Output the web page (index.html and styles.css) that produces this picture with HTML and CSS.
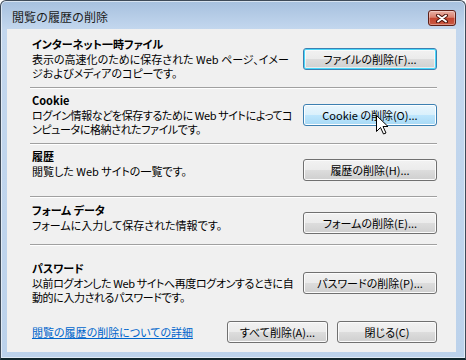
FILE: index.html
```html
<!DOCTYPE html>
<html lang="ja">
<head>
<meta charset="utf-8">
<title>閲覧の履歴の削除</title>
<link rel="stylesheet" href="styles.css">
</head>
<body>
<div class="window">
  <div class="titlebar">
    <span class="title">閲覧の履歴の削除</span>
    <span class="close-btn">
      <svg width="14" height="9" viewBox="0 0 14 9"><path d="M3 1.5 L11 7.5 M11 1.5 L3 7.5" stroke="#4a120b" stroke-width="4" stroke-linecap="round" fill="none"/><path d="M3 1.5 L11 7.5 M11 1.5 L3 7.5" stroke="#ffffff" stroke-width="2" stroke-linecap="round" fill="none"/></svg>
    </span>
  </div>
  <div class="client">
    <div class="section s1">
      <div class="text">
        <div class="heading">インターネット一時ファイル</div>
        <div class="desc">表示の高速化のために保存された Web ページ、イメー<br>ジおよびメディアのコピーです。</div>
      </div>
      <div class="btn btn-default">ファイルの削除(F)...</div>
    </div>
    <div class="sep"></div>
    <div class="section s2">
      <div class="text">
        <div class="heading">Cookie</div>
        <div class="desc desc-tight">ログイン情報などを保存するために Web サイトによってコ<br>ンピュータに格納されたファイルです。</div>
      </div>
      <div class="btn btn-hover">Cookie の削除(O)...</div>
    </div>
    <div class="sep"></div>
    <div class="section s3">
      <div class="text">
        <div class="heading">履歴</div>
        <div class="desc">閲覧した Web サイトの一覧です。</div>
      </div>
      <div class="btn">履歴の削除(H)...</div>
    </div>
    <div class="sep"></div>
    <div class="section s4">
      <div class="text">
        <div class="heading">フォーム データ</div>
        <div class="desc">フォームに入力して保存された情報です。</div>
      </div>
      <div class="btn">フォームの削除(E)...</div>
    </div>
    <div class="sep"></div>
    <div class="section s5">
      <div class="text">
        <div class="heading">パスワード</div>
        <div class="desc desc-tight">以前ログオンした Web サイトへ再度ログオンするときに自<br>動的に入力されるパスワードです。</div>
      </div>
      <div class="btn">パスワードの削除(P)...</div>
    </div>
    <div class="footer">
      <a class="link" href="#">閲覧の履歴の削除についての詳細</a>
      <div class="footer-buttons">
        <div class="btn btn-all">すべて削除(A)...</div>
        <div class="btn btn-close">閉じる(C)</div>
      </div>
    </div>
  </div>
  <svg class="cursor" width="13" height="20" viewBox="0 0 13 20"><path d="M0.5 0.5 L0.5 16.5 L4.5 12.5 L7.5 19 L10 18 L7 11.5 L12 11.5 Z" fill="#ffffff" stroke="#000000" stroke-width="1" stroke-linejoin="miter"/></svg>
</div>
</body>
</html>
```
FILE: styles.css
```css
html, body {
  margin: 0;
  padding: 0;
  background: #ffffff;
}

body {
  font-family: "Noto Sans CJK JP", "Noto Sans", sans-serif;
  font-size: 11px;
  font-feature-settings: "palt";
  color: #000;
}

.window {
  position: relative;
  width: 466px;
  height: 360px;
  box-sizing: border-box;
  border: 1px solid #3e4a58;
  border-bottom: 2px solid #10262c;
  border-radius: 6px 6px 0 0;
  background: linear-gradient(#a6c0de 0, #c3d7ee 28px, #bcd2eb 100%);
  box-shadow: inset 0 0 0 1px rgba(255, 255, 255, 0.55);
  padding: 0 9px 6px 6px;
  display: flex;
  flex-direction: column;
}

.titlebar {
  height: 28px;
  display: flex;
  align-items: flex-start;
  justify-content: space-between;
  padding-left: 5px;
}

.title {
  font-size: 12px;
  line-height: 16px;
  margin-top: 8px;
  color: #1a1a1a;
  font-feature-settings: normal;
}

.close-btn {
  margin-top: 9px;
  width: 28px;
  height: 16px;
  box-sizing: border-box;
  border: 1px solid #5e1f17;
  border-radius: 3px;
  background: linear-gradient(#e9b1a6 0%, #d9806e 45%, #c4452f 52%, #c95a44 100%);
  box-shadow: inset 0 0 0 1px rgba(255, 255, 255, 0.35);
  display: flex;
  align-items: center;
  justify-content: center;
}

.client {
  flex: 1;
  background: #f0f0f0;
  padding: 0 19px 0 23px;
  display: flex;
  flex-direction: column;
}

.section {
  display: flex;
  align-items: flex-start;
}

.text {
  flex: 1;
  padding-left: 2px;
  white-space: nowrap;
}

.heading {
  font-weight: bold;
  line-height: 14px;
}

.desc {
  line-height: 14px;
  margin-top: 1px;
}

.desc-tight {
  letter-spacing: -0.4px;
}

.s1 { padding: 8px 0 7px; }
.s1 .btn { margin-top: 11px; }
.s2 { padding: 4px 0 7px; }
.s2 .btn { margin-top: 11px; }
.s3 { padding: 4px 0 15px; }
.s3 .btn { margin-top: 10px; }
.s4 { padding: 5px 0 10px; }
.s4 .btn { margin-top: 9px; }
.s5 { padding: 15px 0 0; }
.s5 .btn { margin-top: 11px; }

.sep {
  height: 1px;
  background: #a0a0a0;
  border-bottom: 1px solid #ffffff;
}

.btn {
  width: 134px;
  height: 22px;
  box-sizing: border-box;
  border: 1px solid #707070;
  border-radius: 3px;
  background: linear-gradient(#f2f2f2 0%, #ebebeb 50%, #dddddd 50%, #cfcfcf 100%);
  box-shadow: inset 0 0 0 1px #fbfbfb;
  display: flex;
  align-items: center;
  justify-content: center;
  line-height: 14px;
  white-space: nowrap;
  flex: none;
}

.btn-default {
  border-color: #3c7fb1;
  box-shadow: inset 0 0 0 1px #48d8fb, inset 0 0 0 2px rgba(255, 255, 255, 0.6);
}

.btn-hover {
  border-color: #3c7fb1;
  background: linear-gradient(#eaf6fd 0%, #d9f0fc 50%, #bee6fd 50%, #a7d9f5 100%);
  box-shadow: inset 0 0 0 1px #fcfeff;
}

.footer {
  display: flex;
  align-items: center;
  justify-content: space-between;
  margin-top: 17px;
}

.link {
  padding-left: 2px;
  color: #0066cc;
  text-decoration: underline;
  line-height: 14px;
}

.footer-buttons {
  display: flex;
  gap: 9px;
}

.btn-all { width: 101px; }
.btn-close { width: 100px; }

.cursor {
  position: absolute;
  left: 375px;
  top: 114px;
}
```
